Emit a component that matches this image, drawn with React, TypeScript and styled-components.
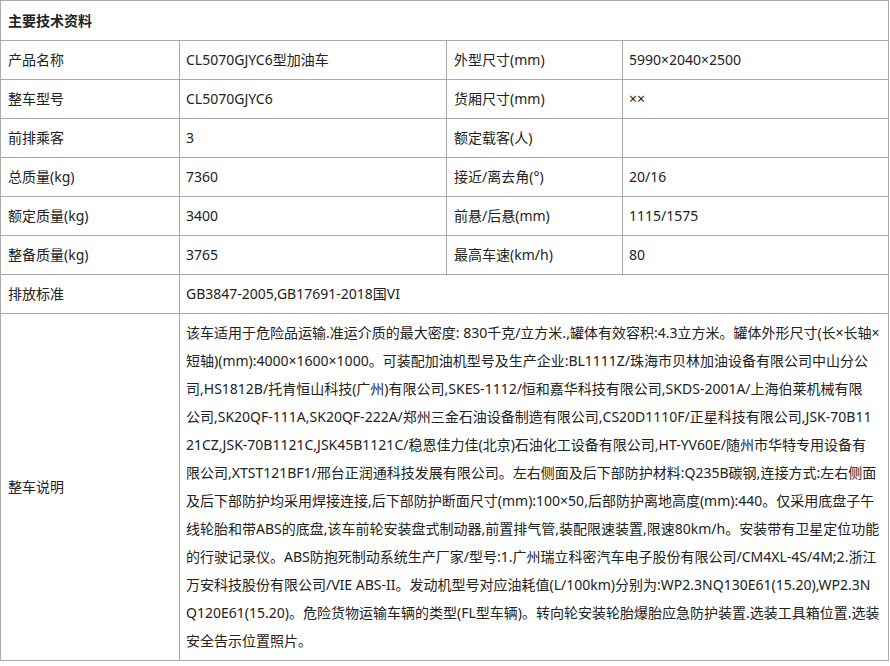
import React from "react";
import styled, { createGlobalStyle } from "styled-components";

const Global = createGlobalStyle`
  html, body { margin: 0; padding: 0; background: #fff; }
  body { font-family: "Noto Sans", "Noto Sans CJK SC", sans-serif; color: #222; }
`;

const Sheet = styled.div`
  display: grid;
  grid-template-columns: 178px 266px 175px 265px;
  grid-template-rows: 39px repeat(7, 38px) auto;
  gap: 1px;
  background: #aaa;
  border: 1px solid #aaa;
  width: max-content;
  font-size: 14px;
`;

const Cell = styled.div<{ $span?: number }>`
  grid-column: span ${(p) => p.$span ?? 1};
  background: #fff;
  display: flex;
  align-items: center;
  padding: 0 6px 0 7px;
  white-space: nowrap;
  line-height: 20px;
`;

const TitleCell = styled(Cell)`
  font-weight: 700;
`;

const ValueCell = styled(Cell)`
  padding-left: 6px;
`;

const TextCell = styled.div`
  grid-column: span 3;
  background: #fff;
  padding: 5px 6px;
  line-height: 28px;
`;

const Line = styled.span`
  display: block;
  white-space: nowrap;
`;

const rows: [string, string, string, string][] = [
  ["产品名称", "CL5070GJYC6型加油车", "外型尺寸(mm)", "5990×2040×2500"],
  ["整车型号", "CL5070GJYC6", "货厢尺寸(mm)", "××"],
  ["前排乘客", "3", "额定载客(人)", ""],
  ["总质量(kg)", "7360", "接近/离去角(°)", "20/16"],
  ["额定质量(kg)", "3400", "前悬/后悬(mm)", "1115/1575"],
  ["整备质量(kg)", "3765", "最高车速(km/h)", "80"],
];

const desc = [
  "该车适用于危险品运输.准运介质的最大密度: 830千克/立方米.,罐体有效容积:4.3立方米。罐体外形尺寸(长×长轴×",
  "短轴)(mm):4000×1600×1000。可装配加油机型号及生产企业:BL1111Z/珠海市贝林加油设备有限公司中山分公",
  "司,HS1812B/托肯恒山科技(广州)有限公司,SKES-1112/恒和嘉华科技有限公司,SKDS-2001A/上海伯莱机械有限",
  "公司,SK20QF-111A,SK20QF-222A/郑州三金石油设备制造有限公司,CS20D1110F/正星科技有限公司,JSK-70B11",
  "21CZ,JSK-70B1121C,JSK45B1121C/稳恩佳力佳(北京)石油化工设备有限公司,HT-YV60E/随州市华特专用设备有",
  "限公司,XTST121BF1/邢台正润通科技发展有限公司。左右侧面及后下部防护材料:Q235B碳钢,连接方式:左右侧面",
  "及后下部防护均采用焊接连接,后下部防护断面尺寸(mm):100×50,后部防护离地高度(mm):440。仅采用底盘子午",
  "线轮胎和带ABS的底盘,该车前轮安装盘式制动器,前置排气管,装配限速装置,限速80km/h。安装带有卫星定位功能",
  "的行驶记录仪。ABS防抱死制动系统生产厂家/型号:1.广州瑞立科密汽车电子股份有限公司/CM4XL-4S/4M;2.浙江",
  "万安科技股份有限公司/VIE ABS-II。发动机型号对应油耗值(L/100km)分别为:WP2.3NQ130E61(15.20),WP2.3N",
  "Q120E61(15.20)。危险货物运输车辆的类型(FL型车辆)。转向轮安装轮胎爆胎应急防护装置.选装工具箱位置.选装",
  "安全告示位置照片。",
];

export default function App() {
  return (
    <>
      <Global />
      <Sheet>
        <TitleCell $span={4}>主要技术资料</TitleCell>
        {rows.map((r) => (
          <React.Fragment key={r[0]}>
            <Cell>{r[0]}</Cell>
            <ValueCell>{r[1]}</ValueCell>
            <Cell>{r[2]}</Cell>
            <ValueCell>{r[3]}</ValueCell>
          </React.Fragment>
        ))}
        <Cell>排放标准</Cell>
        <ValueCell $span={3}>GB3847-2005,GB17691-2018国VI</ValueCell>
        <Cell>整车说明</Cell>
        <TextCell>
          {desc.map((l, i) => (
            <Line key={i}>{l}</Line>
          ))}
        </TextCell>
      </Sheet>
    </>
  );
}
